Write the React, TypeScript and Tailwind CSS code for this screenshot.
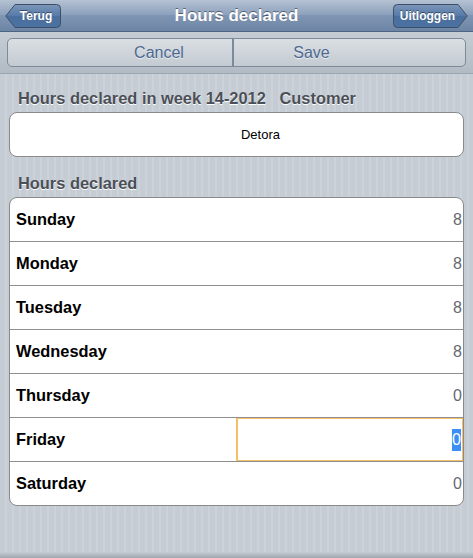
import React from "react";

function NavButton({ label, dir, width }: { label: string; dir: "left" | "right"; width: number }) {
  const h = 24;
  const w = width;
  const p = 10;
  const d =
    dir === "left"
      ? `M${p} 0.5 H${w - 4.5} Q${w - 0.5} 0.5 ${w - 0.5} 4.5 V${h - 4.5} Q${w - 0.5} ${h - 0.5} ${w - 4.5} ${h - 0.5} H${p} L0.8 ${h / 2} Z`
      : `M${w - p} 0.5 H4.5 Q0.5 0.5 0.5 4.5 V${h - 4.5} Q0.5 ${h - 0.5} 4.5 ${h - 0.5} H${w - p} L${w - 0.8} ${h / 2} Z`;
  const id = `g-${dir}`;
  return (
    <div className="relative flex h-[24px] items-center justify-center" style={{ width: w }}>
      <svg className="absolute inset-0" width={w} height={h} viewBox={`0 0 ${w} ${h}`}>
        <defs>
          <linearGradient id={id} x1="0" y1="0" x2="0" y2="1">
            <stop offset="0" stopColor="#7d97b9" />
            <stop offset="0.5" stopColor="#557aa7" />
            <stop offset="0.5" stopColor="#4a6f9e" />
            <stop offset="1" stopColor="#4c72a2" />
          </linearGradient>
        </defs>
        <path d={d} fill={`url(#${id})`} stroke="#3d4f68" strokeWidth="1" />
      </svg>
      <span
        className={`relative text-[12px] font-bold text-white [text-shadow:0_-1px_0_rgba(0,0,0,0.45)] ${dir === "left" ? "pl-[6px]" : "pr-[6px]"}`}
      >
        {label}
      </span>
    </div>
  );
}

const days: [string, string][] = [
  ["Sunday", "8"],
  ["Monday", "8"],
  ["Tuesday", "8"],
  ["Wednesday", "8"],
  ["Thursday", "0"],
  ["Friday", "0"],
  ["Saturday", "0"],
];

export default function App() {
  return (
    <div className="flex h-[558px] w-[473px] flex-col overflow-hidden font-['Liberation_Sans',Arial,sans-serif]">
      {/* Nav bar */}
      <div className="grid h-[32px] shrink-0 grid-cols-[75px_1fr_75px] items-center border-b border-[#4f6382] bg-[linear-gradient(#b5c2d3,#8a9fbb_50%,#7f95b3_50%,#6d85a5)] px-[5px]">
        <div className="flex justify-start">
          <NavButton label="Terug" dir="left" width={56} />
        </div>
        <div className="text-center text-[17px] font-bold text-white [text-shadow:0_-1px_0_rgba(0,0,0,0.45)]">
          Hours declared
        </div>
        <div className="flex justify-end">
          <NavButton label="Uitloggen" dir="right" width={75} />
        </div>
      </div>

      {/* Toolbar */}
      <div className="flex h-[42px] shrink-0 items-center border-b border-[#9aa5b1] bg-[linear-gradient(#c6cdd4,#b2bbc4)] px-[7px]">
        <div className="flex h-[29px] flex-1 overflow-hidden rounded-[5px] border border-[#7c8a9b] bg-[linear-gradient(#dadfe3,#c3cad1)]">
          <div className="flex w-[226px] items-center justify-center border-r-2 border-[#7c8a9b] pl-[78px] text-[16px] text-[#4d6991] [text-shadow:0_1px_0_rgba(255,255,255,0.6)]">
            Cancel
          </div>
          <div className="flex flex-1 items-center justify-center pr-[76px] text-[16px] text-[#4d6991] [text-shadow:0_1px_0_rgba(255,255,255,0.6)]">
            Save
          </div>
        </div>
      </div>

      {/* Content */}
      <div className="flex flex-1 flex-col bg-[repeating-linear-gradient(90deg,#c5ccd4_0px,#c5ccd4_5px,#cbd2d9_5px,#cbd2d9_7px)] pl-[9px] pr-[9px]">
        <div className="mt-[14px] pl-[9px] text-[16.4px] font-bold leading-[20px] text-[#4b4f57] [text-shadow:0_1px_0_#fff]">
          Hours declared in week 14-2012&nbsp;&nbsp; Customer
        </div>
        <div className="mt-[4px] flex h-[45px] items-center justify-center rounded-[8px] border border-[#8a8a8a] bg-white pl-[48px] text-[13px] text-black">
          Detora
        </div>

        <div className="mt-[16px] pl-[9px] text-[16.4px] font-bold leading-[20px] text-[#4b4f57] [text-shadow:0_1px_0_#fff]">
          Hours declared
        </div>
        <div className="mt-[4px] overflow-hidden rounded-[8px] border border-[#8a8a8a] bg-white">
          {days.map(([d, v], i) => (
            <div
              key={d}
              className={`flex items-center ${i > 0 ? "h-[44px] border-t border-[#8f8f8f]" : "h-[43px]"}`}
            >
              <div className="w-[226px] shrink-0 pl-[6px] text-[16.4px] font-bold text-black">{d}</div>
              {d === "Friday" ? (
                <div className="flex h-full flex-1 items-center justify-end border border-l-2 border-[#f3c064] pr-[1px]">
                  <span className="bg-[#3b8ef6] text-[16px] leading-[22px] text-white">{v}</span>
                </div>
              ) : (
                <div className="flex-1 pr-[1px] text-right text-[16px] text-[#666a72]">{v}</div>
              )}
            </div>
          ))}
        </div>
        <div className="flex-1" />
        <div className="-mx-[9px] h-[6px] bg-[linear-gradient(#c5ccd4,#a0a7ae)]" />
      </div>
    </div>
  );
}
